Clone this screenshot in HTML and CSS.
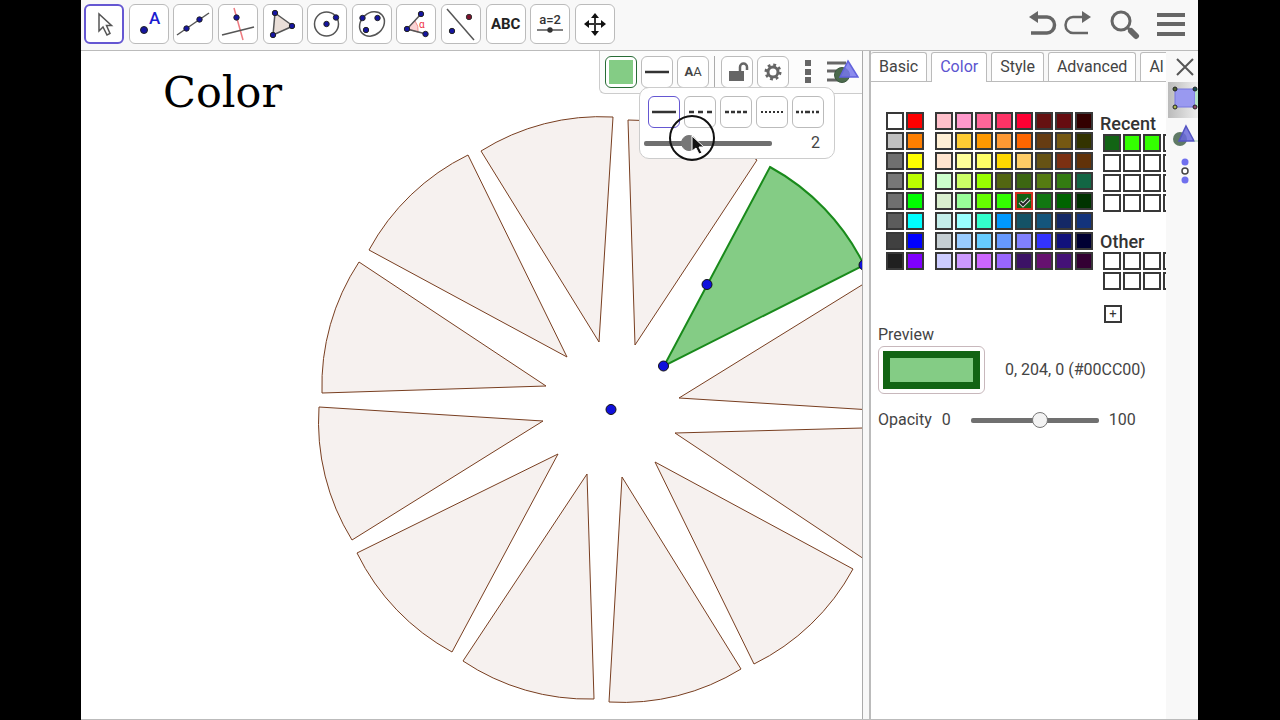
FILE: index.html
```html
<!DOCTYPE html>
<html lang="en">
<head>
<meta charset="utf-8">
<title>Geometry – Color</title>
<link rel="stylesheet" href="styles.css">
</head>
<body>
<div class="app">
  <header class="toolbar">
    <div class="tools">
      <button class="tool selected" aria-label="Move"><svg viewBox="0 0 38 38"><path d="M14 9v17l4-4 4 8 3-1.500-3.500-8h5z" fill="#fff" stroke="#555" stroke-width="1.500"/></svg></button>
      <button class="tool" aria-label="Point"><svg viewBox="0 0 38 38"><circle cx="14" cy="25" r="3.500" class="dot"/><text x="19" y="19" class="point-label">A</text></svg></button>
      <button class="tool" aria-label="Line"><svg viewBox="0 0 38 38"><path d="M3 30 35 8" class="ink"/><circle cx="12.500" cy="23.500" r="2.700" class="dot"/><circle cx="25.500" cy="14.500" r="2.700" class="dot"/></svg></button>
      <button class="tool" aria-label="Perpendicular line"><svg viewBox="0 0 38 38"><path d="m15 3 9 32" stroke="#ee7b80" stroke-width="1.500"/><path d="M3 30 35 22" class="ink"/><circle cx="17.500" cy="12.500" r="2.700" class="dot"/></svg></button>
      <button class="tool" aria-label="Polygon"><svg viewBox="0 0 38 38"><path d="m11 8 18 13-20 9z" fill="#eadfd8" stroke="#555" stroke-width="1.500"/><circle cx="11" cy="8" r="2.700" class="dot"/><circle cx="28" cy="21" r="2.700" class="dot"/><circle cx="9" cy="30" r="2.700" class="dot"/></svg></button>
      <button class="tool" aria-label="Circle"><svg viewBox="0 0 38 38"><circle cx="18.500" cy="19" r="12" class="ink"/><circle cx="18.500" cy="19" r="2.700" class="dot"/><circle cx="28" cy="12.500" r="2.700" class="dot"/></svg></button>
      <button class="tool" aria-label="Conic"><svg viewBox="0 0 38 38"><ellipse cx="19" cy="19" rx="13.500" ry="11" transform="rotate(-42 19 19)" class="ink"/><circle cx="9.500" cy="13" r="2.700" class="dot"/><circle cx="24.500" cy="13" r="2.700" class="dot"/><circle cx="13" cy="25" r="2.700" class="dot"/></svg></button>
      <button class="tool" aria-label="Angle"><svg viewBox="0 0 38 38"><path d="m10 24 8-8q4 5 3 11z" fill="#fbd3d3" stroke="#ee8f8f"/><path d="m24 9-14 15 19 5" class="ink"/><circle cx="24" cy="9" r="2.700" class="dot"/><circle cx="10" cy="24" r="2.700" class="dot"/><circle cx="28.500" cy="29" r="2.700" class="dot"/><text x="22" y="23" class="angle-label">α</text></svg></button>
      <button class="tool" aria-label="Reflect"><svg viewBox="0 0 38 38"><path d="m5 4 27 31" class="ink"/><circle cx="10" cy="26" r="2.700" class="dot"/><circle cx="27" cy="12" r="2.700" fill="#7c102c" stroke="#333"/></svg></button>
      <button class="tool abc" aria-label="Text">ABC</button>
      <button class="tool" aria-label="Slider"><svg viewBox="0 0 38 38"><text x="19" y="19" text-anchor="middle" class="slider-label">a=2</text><path d="M6 25h26" class="ink"/><circle cx="19" cy="25" r="2.700" fill="#333"/></svg></button>
      <button class="tool" aria-label="Move view"><svg viewBox="0 0 38 38"><path d="M19 11v17M11 19h16" stroke="#333" stroke-width="2"/><path d="m19 8 4 5h-8zM19 31l4-5h-8zM8 19l5-4v8zM30 19l-5-4v8z" fill="#111"/></svg></button>
    </div>
    <div class="actions">
      <button class="action" aria-label="Undo"><svg viewBox="0 0 32 32"><path d="M9 9h12a7.500 8 0 0 1 0 16H5" fill="none" stroke="#666" stroke-width="3.500"/><path d="M3 9l9-6v12z" fill="#666"/></svg></button>
      <button class="action" aria-label="Redo"><svg viewBox="0 0 32 32"><path d="M24 9H12a7.500 8 0 0 0 0 16h15" fill="none" stroke="#666" stroke-width="2.500"/><path d="M30 9l-9-6v12z" fill="#666"/></svg></button>
      <button class="action search" aria-label="Search"><svg viewBox="0 0 32 32"><circle cx="13" cy="13" r="9" fill="none" stroke="#666" stroke-width="3"/><path d="m19 19 4 4" stroke="#666" stroke-width="3"/><path d="m23 23 5 5" stroke="#666" stroke-width="6" stroke-linecap="round"/></svg></button>
      <button class="action menu" aria-label="Menu"><svg viewBox="0 0 32 32"><path d="M2 7h28M2 16h28M2 26h28" stroke="#666" stroke-width="4"/></svg></button>
    </div>
  </header>
  <main class="workspace">
    <section class="canvas" aria-label="Graphics view">
      <h1 class="title">Color</h1>
      <svg class="drawing" width="781" height="668" viewBox="81 51 781 668">
        <g class="wedge">
          <path d="M599 342 481 151A225 225 0 0 1 613 117Z"/>
          <path d="M635 345 628 120A225 225 0 0 1 757 160Z"/>
          <path d="M679 398 870 280A225 225 0 0 1 904 412Z"/>
          <path d="M675 433 900 427A225 225 0 0 1 864 559Z"/>
          <path d="M655 462 853 569A225 225 0 0 1 754 664Z"/>
          <path d="M622 477 741 669A225 225 0 0 1 609 702Z"/>
          <path d="M587 474 594 699A225 225 0 0 1 463 661Z"/>
          <path d="M558 454 452 652A225 225 0 0 1 357 553Z"/>
          <path d="M543 421 352 540A225 225 0 0 1 319 407Z"/>
          <path d="M546 386 322 393A225 225 0 0 1 359 262Z"/>
          <path d="M567 357 369 250A225 225 0 0 1 468 155Z"/>
        </g>
        <path class="wedge-active" d="M664 366 770 167A225 225 0 0 1 864 265Z"/>
        <g class="vertex"><circle cx="663.500" cy="366" r="5"/><circle cx="707" cy="284.500" r="5"/><circle cx="611" cy="409.500" r="5"/><circle cx="864" cy="265" r="5"/></g>
      </svg>
      <div class="stylebar">
        <button class="chip chip-color" aria-label="Fill color"><span class="chip-fill"></span></button>
        <button class="chip" aria-label="Line style"><svg viewBox="0 0 30 30"><path d="M3 15h24" stroke="#333" stroke-width="2.500"/></svg></button>
        <button class="chip caps" aria-label="Text size"><b>A</b>A</button>
        <span class="divider"></span>
        <button class="chip" aria-label="Lock"><svg viewBox="0 0 30 30"><path d="M7 14h15v10H7z" fill="#666"/><path d="M18 15V10a3.500 3.500 0 0 1 7 0v3" fill="none" stroke="#666" stroke-width="2.500"/></svg></button>
        <button class="chip" aria-label="Settings"><svg viewBox="0 0 30 30"><circle cx="15" cy="15" r="5" fill="none" stroke="#666" stroke-width="3"/><circle cx="15" cy="15" r="7" fill="none" stroke="#666" stroke-width="3" stroke-dasharray="2.750 2.750"/></svg></button>
        <button class="plain more" aria-label="More"><svg viewBox="0 0 8 26"><path d="M1 1h6v6H1zM1 10h6v6H1zM1 18h6v6H1z" fill="#666"/></svg></button>
        <button class="plain view" aria-label="Object view"><svg viewBox="0 0 34 26"><path d="M2 4h19M2 12h12M2 21h12" stroke="#666" stroke-width="3"/><circle cx="17" cy="16" r="7.500" fill="#4c6a4d" stroke="#3d5740"/><path d="m23 2 10 16H15z" fill="#7777eb" fill-opacity=".85" stroke="#6262dc" stroke-width="1.500"/></svg></button>
      </div>
      <div class="line-popup">
        <div class="line-styles">
          <button class="chip chosen" aria-label="Solid"><svg viewBox="0 0 30 30"><path d="M3 15h24" stroke="#333" stroke-width="2.500"/></svg></button>
          <button class="chip" aria-label="Long dash"><svg viewBox="0 0 30 30"><path d="M4 15h24" stroke="#333" stroke-width="2.500" stroke-dasharray="5 4"/></svg></button>
          <button class="chip" aria-label="Short dash"><svg viewBox="0 0 30 30"><path d="M4 15h23" stroke="#333" stroke-width="2.500" stroke-dasharray="4 2"/></svg></button>
          <button class="chip" aria-label="Dotted"><svg viewBox="0 0 30 30"><path d="M4 15h22" stroke="#333" stroke-width="2" stroke-dasharray="2 2"/></svg></button>
          <button class="chip" aria-label="Dash dot"><svg viewBox="0 0 30 30"><path d="M3 15h24" stroke="#333" stroke-width="2.500" stroke-dasharray="3 2 2 2 5 2 2 2"/></svg></button>
        </div>
        <div class="thickness">
          <input class="range range-dark" id="thickness" type="range" min="1" max="4" value="2" aria-label="Line thickness">
          <output for="thickness">2</output>
        </div>
        <svg class="pointer" viewBox="0 0 46 46"><circle cx="23" cy="23" r="22" fill="none" stroke="#111" stroke-width="2"/><path d="M23 21v15l4-3 3 6 3-1-3-6h5z" fill="#111" stroke="#fff"/></svg>
      </div>
    </section>
    <aside class="panel">
      <div class="properties">
        <nav class="tabs">
          <button class="tab">Basic</button>
          <button class="tab active">Color</button>
          <button class="tab">Style</button>
          <button class="tab">Advanced</button>
          <button class="tab">Al</button>
        </nav>
        <div class="palette">
          <div class="swatches main" id="main-colors"></div>
          <div class="swatches extended" id="extended-colors"></div>
          <div class="custom">
            <h2>Recent</h2>
            <div class="swatches six" id="recent-colors"></div>
            <h2 class="other">Other</h2>
            <div class="swatches six" id="other-colors"></div>
            <button class="swatch add" aria-label="Add color">+</button>
          </div>
        </div>
        <div class="preview-label">Preview</div>
        <div class="preview">
          <div class="preview-frame"><div class="preview-fill"></div></div>
          <span>0, 204, 0 (#00CC00)</span>
        </div>
        <div class="opacity">
          <label for="opacity">Opacity</label><span>0</span>
          <input class="range" id="opacity" type="range" min="0" max="100" value="55"><span>100</span>
        </div>
      </div>
      <div class="rail">
        <button class="close" aria-label="Close"><svg viewBox="0 0 20 20"><path d="m2 2 16 16M18 2 2 18" stroke="#555" stroke-width="2"/></svg></button>
        <button class="rail-item rail-selected" aria-label="Objects"><svg viewBox="0 0 30 36"><path d="M7 7h20v18H7z" fill="#9999f0" stroke="#7777df"/><path d="M27 7h3v18h-3z" fill="#b5e5c4"/><circle cx="7" cy="7" r="2" fill="#506432" stroke="#222"/><circle cx="7" cy="25" r="2" fill="#a9b752" stroke="#222"/><circle cx="27" cy="7" r="2" fill="#174f58" stroke="#222"/><circle cx="27" cy="25" r="2" fill="#8c486d" stroke="#222"/></svg></button>
        <button class="rail-item" aria-label="Graphics"><svg viewBox="0 0 30 36"><circle cx="12" cy="21" r="7" fill="#607a66"/><path d="m18 8 8 15H11z" fill="#6a6adb" fill-opacity=".85" stroke="#5454c2" stroke-width="1.500"/><path d="M26 23h4" stroke="#9fcbb0"/></svg></button>
        <button class="rail-item" aria-label="Points"><svg viewBox="0 0 30 36"><circle cx="17" cy="8" r="3.500" fill="#7070ee"/><circle cx="17" cy="17" r="3" fill="#fff" stroke="#444" stroke-width="1.500"/><circle cx="17" cy="26" r="3.500" fill="#7070ee"/></svg></button>
      </div>
    </aside>
  </main>
</div>
<script src="palette.js"></script>
</body>
</html>
```
FILE: styles.css
```css
* { box-sizing: border-box; }
body { margin: 0; background: #000; color: #444; font: 16px/20px Roboto, sans-serif; }
button { padding: 0; margin: 0; border: 0; background: none; color: inherit; font: inherit; }
svg { display: block; }
.app { display: flex; flex-direction: column; height: 100vh; margin: 0 82px 0 81px; background: #fff; border-bottom: 1px solid #bbb; overflow: hidden; }

.toolbar { display: flex; justify-content: space-between; align-items: center; flex: none; height: 51px; padding: 0 11px 3px 3px; background: #f8f8f8; border-bottom: 1px solid #bbb; }
.tools { display: flex; justify-content: space-between; width: 531px; }
.tool { display: grid; place-items: center; width: 40px; height: 40px; border: 1px solid #bbb; border-radius: 6px; background: #fff; }
.tool svg { width: 38px; height: 38px; }
.tool.selected { border: 2px solid #6557d2; }
.tool.selected svg { margin: -1px; }
.ink { fill: none; stroke: #555; stroke-width: 1.5; }
.dot { fill: #1515a0; stroke: #222; }
.point-label { font: 500 17px Roboto, sans-serif; fill: #1c1cd0; }
.angle-label { font: 10px Roboto, sans-serif; fill: #e34; }
.slider-label { font: 500 13px Roboto, sans-serif; fill: #333; }
.abc { color: #222; font-size: 15px; font-weight: 700; }
.actions { display: flex; align-items: center; gap: 3px; }
.action svg { width: 32px; height: 32px; }
.search { margin-left: 12px; }
.menu { margin-left: 12px; }

.workspace { display: flex; flex: 1; min-height: 0; background: #f8f8f8; }
.canvas { position: relative; flex: 1; min-width: 0; overflow: hidden; border-right: 1px solid #aaa; background: #fff; }
.title { position: absolute; left: 82px; top: 16px; margin: 0; color: #000; font: 43px/50px "DejaVu Serif", serif; }
.drawing { position: absolute; left: 0; top: 0; }
.wedge { fill: #f6f1ef; stroke: #783e20; stroke-width: 1; }
.wedge-active { fill: #84cc85; stroke: #198a1b; stroke-width: 2; }
.vertex { fill: #1010dc; stroke: #111; stroke-width: 1; }

.stylebar { position: absolute; top: 0; right: 0; display: flex; align-items: center; gap: 4px; height: 43px; padding: 0 3px 0 5px; border: 1px solid #ccc; border-width: 0 0 1px 1px; border-radius: 0 0 0 6px; background: #fcfcfc; }
.chip { display: grid; place-items: center; width: 32px; height: 32px; border: 1px solid #bbb; border-radius: 6px; background: #fff; }
.chip svg { width: 30px; height: 30px; }
.chip-color { border-color: #286c36; }
.chip-fill { width: 24px; height: 24px; background: #84cc85; }
.caps { display: flex; align-items: center; justify-content: center; font-size: 13px; }
.divider { width: 1px; height: 32px; margin: 0 2px 0 1px; background: #aaa; }
.more { margin: 0 9px 0 11px; }
.more svg { width: 8px; height: 26px; }
.view svg { width: 34px; height: 26px; }
.line-popup { position: absolute; top: 36px; right: 27px; width: 196px; padding: 8px 8px 0; border: 1px solid #ccc; border-radius: 10px; background: #fff; }
.line-styles { display: flex; gap: 4px; }
.chosen { border-color: #6557d2; }
.thickness { display: flex; align-items: center; justify-content: space-between; height: 30px; padding: 0 6px 0 0; margin-left: -4px; }
.pointer { position: absolute; left: 29px; top: 27px; width: 46px; height: 46px; pointer-events: none; }

.range { appearance: none; width: 128px; height: 18px; margin: 0; background: transparent; }
.range::-webkit-slider-runnable-track { height: 5px; border-radius: 2px; background: #707070; }
.range::-webkit-slider-thumb { appearance: none; width: 16px; height: 16px; margin-top: -6px; border: 1px solid #777; border-radius: 50%; background: #f3f3f3; }
.range-dark::-webkit-slider-thumb { background: #777; }

.panel { display: flex; flex: none; width: 329px; margin-left: 6px; border-left: 2px solid #bbb; background: #fff; }
.properties { flex: 1; min-width: 0; overflow: hidden; }
.tabs { display: flex; height: 31px; gap: 4px; border-bottom: 1px solid #bbb; background: #f8f8f8; }
.tab { flex: none; height: 29px; margin-top: 1px; padding: 0 8px 1px; border: 1px solid #bbb; border-bottom: 0; border-radius: 3px 3px 0 0; background: #fff; }
.tab:first-child { border-left: 0; }
.tab.active { height: 30px; color: #5c55d0; }
.palette { display: flex; align-items: flex-start; padding: 30px 0 0 15px; }
.swatches { display: grid; flex: none; gap: 2px; grid-auto-rows: 18px; }
.main { grid-template-columns: repeat(2, 18px); margin-right: 11px; }
.extended { grid-template-columns: repeat(8, 18px); margin-right: 7px; }
.six { grid-template-columns: repeat(6, 18px); margin-left: 3px; }
.swatch { display: grid; place-items: center; width: 18px; height: 18px; border: 2px solid #383838; }
.swatch.checked { border-color: #d02f20; }
.swatch svg { width: 14px; height: 14px; }
.custom { padding-top: 2px; color: #333; }
.custom h2 { margin: 0; font: 500 18px/20px Roboto, sans-serif; }
.custom .other { margin-top: 20px; }
.add { margin: 15px 0 0 4px; font-size: 13px; line-height: 14px; }
.preview-label { padding: 2px 7px 1px; }
.preview { display: flex; align-items: center; gap: 20px; padding-left: 7px; }
.preview-frame { width: 107px; height: 48px; padding: 4px; border: 1px solid #c8b8bc; border-radius: 6px; }
.preview-fill { height: 100%; border: 7px solid #126414; background: #84cc85; }
.opacity { display: flex; align-items: center; gap: 10px; padding: 16px 0 0 7px; }
.opacity .range { margin-left: 10px; }
.rail { flex: none; width: 32px; background: #f8f8f8; }
.close { display: grid; place-items: center; width: 32px; height: 31px; padding-left: 6px; }
.close svg { width: 20px; height: 20px; }
.rail-item { display: block; margin-left: 2px; }
.rail-item svg { width: 30px; height: 36px; }
.rail-selected { background: linear-gradient(90deg, #bbb, #eee); }
```
FILE: palette.js
```js
const mainColors = ['#fff', '#f00', '#c0c0c0', '#ff7f00', '#707070', '#ff0', '#777', '#bf0', '#707070', '#0f0', '#5c5c5c', '#0ff', '#404040', '#00f', '#202020', '#7f00ff'];
const extendedColors = [
  '#ffc0cb', '#ff99cc', '#ff6699', '#ff3366', '#ff0033', '#661111', '#660c10', '#330000',
  '#ffefd5', '#ffcc33', '#ff9900', '#ff9933', '#ff6600', '#663c12', '#755812', '#333300',
  '#ffe4cf', '#ffff99', '#ffff66', '#ffd700', '#ffcc66', '#665214', '#7b3012', '#613209',
  '#ccffcc', '#ccff66', '#99ff00', '#526611', '#3c6611', '#557b11', '#337b11', '#126644',
  '#d9efcf', '#99ff99', '#66ff00', '#33ff00', '#126414', '#117711', '#006400', '#003300',
  '#c4eeea', '#99ffff', '#33ffcc', '#0099ff', '#145266', '#14557b', '#142866', '#13337b',
  '#c5ced2', '#99ccff', '#66ccff', '#6699ff', '#8080ff', '#3333ff', '#11117b', '#000033',
  '#ccccff', '#cc99ff', '#cc66ff', '#9966ff', '#3c1266', '#661170', '#441177', '#330033'
];
const recentColors = ['#126414', '#33ff00', '#33ff00', ...Array(21).fill('#fff')];
const otherColors = Array(12).fill('#fff');

function fill(id, colors, checked) {
  const grid = document.getElementById(id);
  colors.forEach((color, index) => {
    const button = document.createElement('button');
    button.className = 'swatch';
    button.style.background = color;
    button.setAttribute('aria-label', 'Color ' + color);
    if (index === checked) {
      button.classList.add('checked');
      button.innerHTML = '<svg viewBox="0 0 14 14"><path d="m3 8 3 3 6-6" fill="none" stroke="#ddd" stroke-width="4"/><path d="m3 8 3 3 6-6" fill="none" stroke="#222" stroke-width="2"/></svg>';
    }
    grid.append(button);
  });
}

fill('main-colors', mainColors);
fill('extended-colors', extendedColors, 36);
fill('recent-colors', recentColors);
fill('other-colors', otherColors);
```
